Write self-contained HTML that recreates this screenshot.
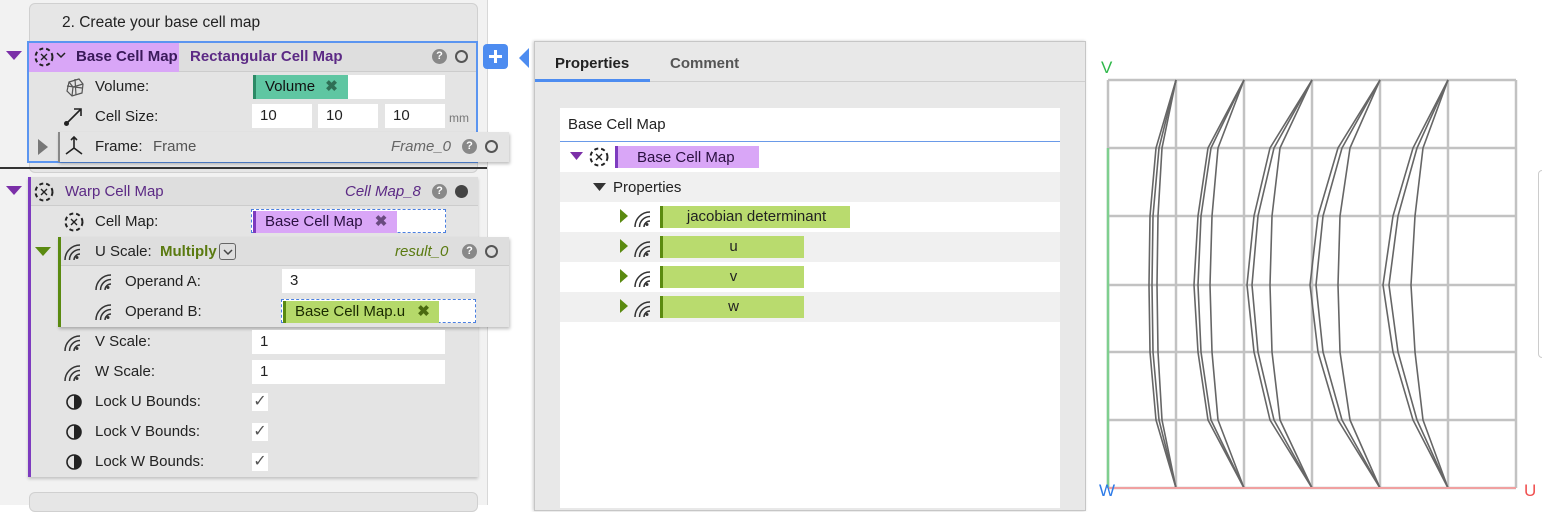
<!DOCTYPE html>
<html><head><meta charset="utf-8"><style>
*{box-sizing:border-box;margin:0;padding:0}
body{width:1542px;height:505px;overflow:hidden;background:#fff;font-family:"Liberation Sans",sans-serif;font-size:15px;color:#222;position:relative}
.a{position:absolute}
.t{position:absolute;white-space:nowrap;line-height:16px}
.inp{position:absolute;background:#fff;height:24px;line-height:24px;padding-left:8px;font-size:15px}
.q{position:absolute;width:15px;height:15px;border-radius:50%;background:#888;color:#fff;font-size:11px;font-weight:bold;text-align:center;line-height:15px}
.o{position:absolute;width:13px;height:13px;border-radius:50%;border:2.5px solid #555}
.chk{position:absolute;width:16px;height:18px;background:#fff;color:#555;font-size:16px;line-height:18px;text-align:center}
</style></head><body>
<div class="a" style="left:0;top:0;width:488px;height:505px;background:#f2f2f2;border-right:1px solid #d8d8d8"></div>
<div class="a" style="left:29px;top:3px;width:449px;height:170px;background:#e6e6e6;border:1px solid #d0d0d0;border-radius:6px"></div>
<div class="t" style="left:62px;top:15px;font-size:15.5px">2. Create your base cell map</div>
<div class="a" style="left:27px;top:41px;width:451px;height:122px;background:#e4e4e4;border:2px solid #5b95f0"></div>
<div class="a" style="left:29px;top:43px;width:447px;height:29px;background:#dedede;border-bottom:1px solid #ccc"></div>
<div class="a" style="left:29px;top:43px;width:150px;height:29px;background:#d9a6f7"></div>
<svg class="a" style="left:6px;top:51px" width="16" height="10"><path d="M0 0H16L8 9Z" fill="#7b2fa8"/></svg>
<svg class="a" style="left:33px;top:46px" width="22" height="22"><circle cx="11" cy="11" r="8.5" fill="none" stroke="#222" stroke-width="2" stroke-dasharray="4 3"/><path d="M8 8L14 14M14 8L8 14" stroke="#222" stroke-width="1.4"/></svg>
<svg class="a" style="left:56px;top:52px" width="10" height="7"><path d="M1 1L5 5L9 1" fill="none" stroke="#222" stroke-width="1.5"/></svg>
<div class="t" style="left:76px;top:49px;font-weight:bold;color:#3a1a5a">Base Cell Map</div>
<div class="t" style="left:190px;top:49px;font-weight:bold;color:#5c2a85">Rectangular Cell Map</div>
<div class="q" style="left:432px;top:49px">?</div><div class="o" style="left:455px;top:50px"></div>
<svg class="a" style="left:64px;top:76px" width="24" height="24"><g fill="none" stroke="#555" stroke-width="1.2"><path d="M5 6L15 3L19 8L18 17L8 20L3 15Z"/><path d="M5 6L9 11L19 8M9 11L8 20M3 10L18 12M11 3L12 19"/></g></svg>
<div class="t" style="left:95px;top:79px">Volume:</div>
<div class="inp" style="left:253px;top:75px;width:192px"></div>
<div class="inp" style="left:253px;top:75px;width:95px;background:#5fc6a2;border-left:3px solid #2c8a66;padding-left:9px;color:#111">Volume <span style="color:#2f6f55;font-weight:bold;margin-left:6px">✖</span></div>
<svg class="a" style="left:63px;top:105px" width="22" height="22"><path d="M3 19L18 4M11 4H18V11" fill="none" stroke="#222" stroke-width="1.6"/><circle cx="3.5" cy="18.5" r="2.5" fill="#222"/></svg>
<div class="t" style="left:95px;top:109px">Cell Size:</div>
<div class="inp" style="left:252px;top:104px;width:60px">10</div>
<div class="inp" style="left:318px;top:104px;width:60px">10</div>
<div class="inp" style="left:385px;top:104px;width:60px">10</div>
<div class="t" style="left:449px;top:110px;font-size:12px;color:#777">mm</div>
<div class="a" style="left:58px;top:132px;width:451px;height:30px;background:#e4e4e4;border-left:2px solid #888;box-shadow:1px 2px 3px rgba(0,0,0,.25)"></div>
<svg class="a" style="left:38px;top:139px" width="10" height="16"><path d="M0 0L10 8L0 16Z" fill="#777"/></svg>
<svg class="a" style="left:63px;top:135px" width="22" height="22"><path d="M11 2V13M11 13L3 19M11 13L19 19M8 5L11 2L14 5" fill="none" stroke="#222" stroke-width="1.6"/></svg>
<div class="t" style="left:95px;top:139px">Frame:</div>
<div class="t" style="left:153px;top:139px;color:#555">Frame</div>
<div class="t" style="left:391px;top:139px;color:#666;font-style:italic">Frame_0</div>
<div class="q" style="left:462px;top:139px">?</div><div class="o" style="left:485px;top:140px"></div>
<div class="a" style="left:0;top:167px;width:487px;height:2px;background:#333"></div>
<div class="a" style="left:28px;top:177px;width:450px;height:300px;background:#e4e4e4;border-left:3px solid #7d3bbf;box-shadow:0 2px 3px rgba(0,0,0,.2)"></div>
<div class="a" style="left:31px;top:177px;width:447px;height:29px;background:#dedede;border-bottom:1px solid #ccc"></div>
<svg class="a" style="left:6px;top:186px" width="16" height="10"><path d="M0 0H16L8 9Z" fill="#7b2fa8"/></svg>
<svg class="a" style="left:33px;top:181px" width="22" height="22"><circle cx="11" cy="11" r="8.5" fill="none" stroke="#222" stroke-width="2" stroke-dasharray="4 3"/><path d="M8 8L14 14M14 8L8 14" stroke="#222" stroke-width="1.4"/></svg>
<div class="t" style="left:65px;top:184px;color:#5c2a85">Warp Cell Map</div>
<div class="t" style="left:345px;top:184px;color:#5c2a85;font-style:italic">Cell Map_8</div>
<div class="q" style="left:432px;top:184px">?</div><div class="a" style="left:455px;top:185px;width:13px;height:13px;border-radius:50%;background:#444"></div>
<svg class="a" style="left:63px;top:211px" width="22" height="22"><circle cx="11" cy="11" r="8.5" fill="none" stroke="#222" stroke-width="2" stroke-dasharray="4 3"/><path d="M8 8L14 14M14 8L8 14" stroke="#222" stroke-width="1.4"/></svg>
<div class="t" style="left:95px;top:214px">Cell Map:</div>
<div class="inp" style="left:251px;top:209px;width:195px;border:1px dashed #4a7fe0"></div>
<div class="inp" style="left:253px;top:211px;width:144px;height:22px;line-height:22px;background:#d9a6f7;border-left:3px solid #7d3bbf;padding-left:9px;color:#2a1040">Base Cell Map <span style="color:#6a4a80;font-weight:bold;margin-left:8px">✖</span></div>
<div class="a" style="left:58px;top:237px;width:451px;height:90px;background:#e4e4e4;border-left:3px solid #5a8a10;box-shadow:1px 2px 3px rgba(0,0,0,.25)"></div>
<div class="a" style="left:61px;top:237px;width:448px;height:29px;background:#dedede;border-bottom:1px solid #ccc"></div>
<svg class="a" style="left:35px;top:247px" width="16" height="10"><path d="M0 0H16L8 9Z" fill="#5a8a10"/></svg>
<div class="t" style="left:95px;top:244px">U Scale:</div>
<div class="t" style="left:160px;top:244px;color:#5a7a10;font-weight:bold">Multiply</div>
<div class="a" style="left:219px;top:243px;width:17px;height:17px;border:1.5px solid #666;border-radius:3px"></div>
<svg class="a" style="left:223px;top:249px" width="10" height="7"><path d="M1 1L5 5L9 1" fill="none" stroke="#444" stroke-width="1.5"/></svg>
<div class="t" style="left:395px;top:244px;color:#5a7a10;font-style:italic">result_0</div>
<div class="q" style="left:462px;top:244px">?</div><div class="o" style="left:485px;top:245px"></div>
<div class="t" style="left:125px;top:274px">Operand A:</div>
<div class="inp" style="left:282px;top:269px;width:193px">3</div>
<div class="t" style="left:125px;top:304px">Operand B:</div>
<div class="inp" style="left:281px;top:299px;width:195px;border:1px dashed #4a7fe0"></div>
<div class="inp" style="left:283px;top:301px;width:156px;height:22px;line-height:22px;background:#b5d96a;border-left:3px solid #5a8a10;padding-left:9px;color:#1a2a00">Base Cell Map.u <span style="color:#4a6a10;font-weight:bold;margin-left:8px">✖</span></div>
<div class="t" style="left:95px;top:334px">V Scale:</div>
<div class="inp" style="left:252px;top:330px;width:193px">1</div>
<div class="t" style="left:95px;top:364px">W Scale:</div>
<div class="inp" style="left:252px;top:360px;width:193px">1</div>
<div class="t" style="left:95px;top:394px">Lock U Bounds:</div>
<div class="t" style="left:95px;top:424px">Lock V Bounds:</div>
<div class="t" style="left:95px;top:454px">Lock W Bounds:</div>
<div class="chk" style="left:252px;top:393px">✓</div>
<div class="chk" style="left:252px;top:423px">✓</div>
<div class="chk" style="left:252px;top:453px">✓</div>
<svg class="a" style="left:65px;top:393px" width="18" height="18"><circle cx="9" cy="9" r="7" fill="none" stroke="#222" stroke-width="1.6"/><path d="M9 2A7 7 0 0 1 9 16Z" fill="#222"/></svg>
<svg class="a" style="left:65px;top:423px" width="18" height="18"><circle cx="9" cy="9" r="7" fill="none" stroke="#222" stroke-width="1.6"/><path d="M9 2A7 7 0 0 1 9 16Z" fill="#222"/></svg>
<svg class="a" style="left:65px;top:453px" width="18" height="18"><circle cx="9" cy="9" r="7" fill="none" stroke="#222" stroke-width="1.6"/><path d="M9 2A7 7 0 0 1 9 16Z" fill="#222"/></svg>
<svg class="a" width="0" height="0"><defs><g id="w"><path d="M11 22A6 6 0 0 1 17 16M6.5 22A10.5 10.5 0 0 1 17 11.5M2 22A15 15 0 0 1 17 7" fill="none" stroke="#333" stroke-width="1.5"/><circle cx="14" cy="19.5" r="1.5" fill="#333"/></g></defs></svg>
<svg class="a" style="left:63px;top:238px" width="24" height="24"><use href="#w"/></svg>
<svg class="a" style="left:94px;top:298px" width="24" height="24"><use href="#w"/></svg>
<svg class="a" style="left:94px;top:268px" width="24" height="24"><use href="#w"/></svg>
<svg class="a" style="left:63px;top:329px" width="24" height="24"><use href="#w"/></svg>
<svg class="a" style="left:63px;top:359px" width="24" height="24"><use href="#w"/></svg>
<div class="a" style="left:29px;top:492px;width:449px;height:20px;background:#e6e6e6;border:1px solid #d0d0d0;border-radius:6px"></div>
<div class="a" style="left:483px;top:44px;width:25px;height:25px;background:#4d8cf0;border-radius:4px"></div>
<div class="a" style="left:489px;top:55px;width:13px;height:3px;background:#fff"></div>
<div class="a" style="left:494px;top:50px;width:3px;height:13px;background:#fff"></div>
<svg class="a" style="left:519px;top:48px" width="10" height="20"><path d="M10 0V20L0 10Z" fill="#4d8cf0"/></svg>
<div class="a" style="left:534px;top:41px;width:552px;height:470px;background:#e8e8e8;border:1px solid #c6c6c6;box-shadow:-1px 0 3px rgba(0,0,0,.2)"></div>
<div class="a" style="left:535px;top:81px;width:550px;height:1px;background:#cfcfcf"></div>
<div class="a" style="left:535px;top:79px;width:115px;height:3px;background:#4d8cf0"></div>
<div class="t" style="left:555px;top:56px;font-weight:bold;font-size:15px">Properties</div>
<div class="t" style="left:670px;top:56px;font-weight:bold;font-size:15px;color:#555">Comment</div>
<div class="a" style="left:560px;top:108px;width:500px;height:400px;background:#fff"></div>
<div class="t" style="left:568px;top:117px">Base Cell Map</div>
<div class="a" style="left:560px;top:141px;width:500px;height:1px;background:#6a9ae8"></div>
<div class="a" style="left:560px;top:172px;width:500px;height:30px;background:#f0f0f0"></div>
<div class="a" style="left:560px;top:232px;width:500px;height:30px;background:#f0f0f0"></div>
<div class="a" style="left:560px;top:292px;width:500px;height:30px;background:#f0f0f0"></div>
<svg class="a" style="left:570px;top:152px" width="13" height="9"><path d="M0 0H13L6.5 8Z" fill="#7b2fa8"/></svg>
<svg class="a" style="left:588px;top:146px" width="22" height="22"><circle cx="11" cy="11" r="8.5" fill="none" stroke="#222" stroke-width="2" stroke-dasharray="4 3"/><path d="M8 8L14 14M14 8L8 14" stroke="#222" stroke-width="1.4"/></svg>
<div class="a" style="left:615px;top:146px;width:144px;height:22px;background:#d9a6f7;border-left:3px solid #7d3bbf"></div>
<div class="t" style="left:637px;top:150px;color:#2a1040">Base Cell Map</div>
<svg class="a" style="left:593px;top:183px" width="13" height="9"><path d="M0 0H13L6.5 8Z" fill="#333"/></svg>
<div class="t" style="left:613px;top:180px">Properties</div>
<svg class="a" style="left:620px;top:209px" width="8" height="14"><path d="M0 0L8 7L0 14Z" fill="#5a8a10"/></svg>
<svg class="a" style="left:620px;top:239px" width="8" height="14"><path d="M0 0L8 7L0 14Z" fill="#5a8a10"/></svg>
<svg class="a" style="left:620px;top:269px" width="8" height="14"><path d="M0 0L8 7L0 14Z" fill="#5a8a10"/></svg>
<svg class="a" style="left:620px;top:299px" width="8" height="14"><path d="M0 0L8 7L0 14Z" fill="#5a8a10"/></svg>
<svg class="a" style="left:633px;top:205px" width="24" height="24"><use href="#w"/></svg>
<svg class="a" style="left:633px;top:235px" width="24" height="24"><use href="#w"/></svg>
<svg class="a" style="left:633px;top:265px" width="24" height="24"><use href="#w"/></svg>
<svg class="a" style="left:633px;top:295px" width="24" height="24"><use href="#w"/></svg>
<div class="a" style="left:660px;top:206px;width:190px;height:22px;background:#b9db6e;border-left:3px solid #5a8a10;text-align:center;line-height:22px">jacobian determinant</div>
<div class="a" style="left:660px;top:236px;width:144px;height:22px;background:#b9db6e;border-left:3px solid #5a8a10;text-align:center;line-height:22px">u</div>
<div class="a" style="left:660px;top:266px;width:144px;height:22px;background:#b9db6e;border-left:3px solid #5a8a10;text-align:center;line-height:22px">v</div>
<div class="a" style="left:660px;top:296px;width:144px;height:22px;background:#b9db6e;border-left:3px solid #5a8a10;text-align:center;line-height:22px">w</div>
<div class="a" style="left:1538px;top:170px;width:8px;height:188px;border:1px solid #ccc;border-radius:4px;background:#fff"></div>
<svg class="a" style="left:1090px;top:50px" width="450" height="455">
<g stroke="#c2c2c2" stroke-width="2.5" fill="none">
<path d="M18 30V438M86 30V438M154 30V438M222 30V438M290 30V438M358 30V438M426 30V438"/>
<path d="M18 30H426M18 98H426M18 166H426M18 235H426M18 302H426M18 370H426M18 438H426"/>
</g>
<g fill="none" stroke="#666" stroke-width="1.6">
<path d="M86 30L66 98L60 166L59 235L60 302L66 370L86 438"/>
<path d="M86 30L69 98L63 166L62 235L63 302L69 370L86 438"/>
<path d="M86 30L72 98L68 166L67 235L68 302L72 370L86 438"/>
<path d="M154 30L118 98L108 166L104 235L108 302L118 370L154 438"/>
<path d="M154 30L121 98L111 166L108 235L111 302L121 370L154 438"/>
<path d="M154 30L128 98L122 166L120 235L122 302L128 370L154 438"/>
<path d="M222 30L180 98L164 166L157 235L164 302L180 370L222 438"/>
<path d="M222 30L184 98L168 166L162 235L168 302L184 370L222 438"/>
<path d="M222 30L190 98L182 166L180 235L182 302L190 370L222 438"/>
<path d="M290 30L248 98L228 166L220 235L228 302L248 370L290 438"/>
<path d="M290 30L252 98L233 166L226 235L233 302L252 370L290 438"/>
<path d="M290 30L260 98L250 166L248 235L250 302L260 370L290 438"/>
<path d="M358 30L323 98L303 166L293 235L303 302L323 370L358 438"/>
<path d="M358 30L327 98L308 166L299 235L308 302L327 370L358 438"/>
<path d="M358 30L333 98L325 166L321 235L325 302L333 370L358 438"/>
</g>
<path d="M18 98V438" stroke="#7fcf8f" stroke-width="2.5"/>
<path d="M18 438H426" stroke="#f0a0a0" stroke-width="2"/>
<text x="11" y="23" fill="#2fb84a" font-family="Liberation Sans" font-size="17">V</text>
<text x="9" y="446" fill="#2d7be8" font-family="Liberation Sans" font-size="17">W</text>
<text x="434" y="446" fill="#f05050" font-family="Liberation Sans" font-size="17">U</text>
</svg>
</body></html>
